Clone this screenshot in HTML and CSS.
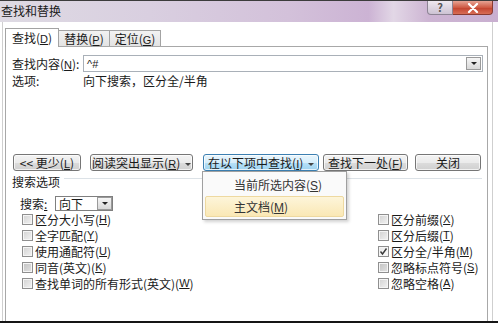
FILE: index.html
```html
<!DOCTYPE html>
<html lang="zh-CN">
<head>
  <meta charset="UTF-8" />
  <title>查找和替换</title>
  <link rel="stylesheet" href="styles.css">
</head>
<body>

  <div class="dialog">
    <div class="titlebar">
      <span class="title">查找和替换</span>
      <div class="caption-btns">
        <span class="cap-help">?</span>
        <span class="cap-close">
          <svg width="12" height="10" viewBox="0 0 12 10"><path d="M2 1 L10 9 M10 1 L2 9" stroke="#fff" stroke-width="2.2" stroke-linecap="round"/></svg>
        </span>
      </div>
    </div>

    <div class="client">
      <div class="tabs">
        <div class="tab active">查找(<u class="k">D</u>)</div>
        <div class="tab">替换(<u class="k">P</u>)</div>
        <div class="tab">定位(<u class="k">G</u>)</div>
      </div>

      <div class="panel">
        <div class="find-row">
          <span class="field-label">查找内容(<u class="k">N</u>):</span>
          <div class="combo">
            <span class="combo-text">^#</span>
            <span class="drop-btn"><i class="tri"></i></span>
          </div>
        </div>

        <div class="opt-row">
          <span class="field-label">选项:</span>
          <span>向下搜索，区分全/半角</span>
        </div>

        <div class="btn-row">
          <button class="btn btn-less">&lt;&lt; 更少(<u class="k">L</u>)</button>
          <button class="btn btn-read">阅读突出显示(<u class="k">R</u>) <i class="tri"></i></button>
          <div class="menu-wrap">
            <button class="btn btn-find-in">在以下项中查找(<u class="k">I</u>) <i class="tri"></i></button>
            <ul class="menu">
              <li>当前所选内容(<u>S</u>)</li>
              <li class="hover">主文档(<u>M</u>)</li>
            </ul>
          </div>
          <button class="btn btn-next">查找下一处(<u class="k">F</u>)</button>
          <button class="btn btn-close">关闭</button>
        </div>

        <div class="group-row">
          <span>搜索选项</span>
          <span class="group-line"></span>
        </div>

        <div class="search-row">
          <span class="search-label">搜索<u>:</u></span>
          <div class="select">
            <span class="select-text">向下</span>
            <span class="drop-btn"><i class="tri"></i></span>
          </div>
        </div>

        <div class="check-grid">
          <div class="check"><span class="box"></span>区分大小写(<u class="k">H</u>)</div>
          <div class="check"><span class="box"></span>区分前缀(<u class="k">X</u>)</div>
          <div class="check"><span class="box"></span>全字匹配(<u class="k">Y</u>)</div>
          <div class="check"><span class="box"></span>区分后缀(<u class="k">T</u>)</div>
          <div class="check"><span class="box"></span>使用通配符(<u class="k">U</u>)</div>
          <div class="check"><span class="box checked"><svg width="9" height="9" viewBox="0 0 9 9"><path d="M1.5 4.5 L3.5 7 L7.5 1.5" fill="none" stroke="#3a3a3a" stroke-width="1.4"/></svg></span>区分全/半角(<u class="k">M</u>)</div>
          <div class="check"><span class="box dim"></span>同音(英文)(<u class="k">K</u>)</div>
          <div class="check"><span class="box dim"></span>忽略标点符号(<u class="k">S</u>)</div>
          <div class="check"><span class="box"></span>查找单词的所有形式(英文)(<u class="k">W</u>)</div>
          <div class="check"><span class="box"></span>忽略空格(<u class="k">A</u>)</div>
        </div>
      </div>
    </div>
  </div>

</body>
</html>
```

FILE: styles.css
```css
* {
  box-sizing: border-box;
}

body {
  margin: 0;
  background: #fff;
  font-family: "Noto Sans CJK SC", "DejaVu Sans", sans-serif;
  font-size: 12px;
  color: #1a1a1a;
  overflow: hidden;
}

u.k {
  font-family: "Liberation Sans", sans-serif;
  font-size: 11px;
}

.dialog {
  width: 498px;
  height: 323px;
  display: flex;
  flex-direction: column;
  border-bottom: 2px solid #151515;
}

/* title bar */
.titlebar {
  height: 22px;
  flex: none;
  display: flex;
  align-items: flex-start;
  border-top: 1px solid #3c3c3c;
  background: linear-gradient(90deg, #dedae3 0%, #d9cfe0 30%, #d3c1da 58%, #ccb3d4 74%, #e2d7e6 79%, #cdb5d3 86%, #c9afd0 100%);
}

.title {
  line-height: 20px;
  padding-left: 1px;
}

.caption-btns {
  margin-left: auto;
  margin-right: 5px;
  display: flex;
}

.cap-help {
  width: 26px;
  height: 14px;
  border: 1px solid #8d8494;
  border-top: none;
  border-radius: 0 0 0 4px;
  background: linear-gradient(#eee8f0, #cdc3d3);
  color: #555;
  font-size: 11px;
  line-height: 12px;
  text-align: center;
  font-weight: bold;
}

.cap-close {
  width: 40px;
  height: 14px;
  border: 1px solid #8a3a30;
  border-top: none;
  border-left: none;
  border-radius: 0 0 4px 0;
  background: linear-gradient(#e7a394, #cf5a44 50%, #c2412d 51%, #d86d55);
  display: flex;
  align-items: center;
  justify-content: center;
}

/* client area */
.client {
  flex: 1;
  display: flex;
  flex-direction: column;
  margin: 0 5px 0 2px;
  padding: 6px 4px 0 2px;
  border-left: 1px solid #cfcfcf;
  border-right: 1px solid #cfcfcf;
}

.tabs {
  display: flex;
  align-items: flex-end;
  height: 18px;
  flex: none;
  position: relative;
  z-index: 1;
}

.tab {
  width: 52px;
  height: 16px;
  line-height: 15px;
  text-align: center;
  border: 1px solid #a3a3a3;
  border-bottom: none;
  background: linear-gradient(#f2f2f2, #e3e3e3);
  margin-left: -1px;
}

.tab.active {
  width: 54px;
  height: 19px;
  line-height: 17px;
  margin-left: 0;
  margin-bottom: -1px;
  background: #fff;
  position: relative;
  z-index: 2;
}

.panel {
  flex: 1;
  border: 1px solid #a8a8a8;
  border-bottom: none;
  background: #fff;
}

.field-label {
  width: 77px;
  padding-left: 6px;
  flex: none;
}

.find-row {
  margin-top: 8px;
  height: 17px;
  display: flex;
  align-items: center;
}

.combo {
  width: 400px;
  height: 17px;
  border: 1px solid #a9b0b8;
  display: flex;
  align-items: center;
  padding-left: 3px;
}

.combo-text {
  font-family: "Liberation Sans", sans-serif;
  font-size: 11px;
}

.drop-btn {
  margin-left: auto;
  margin-right: 1px;
  width: 15px;
  height: 13px;
  border: 1px solid #9a9a9a;
  background: linear-gradient(#f6f6f6, #d8d8d8);
  display: flex;
  align-items: center;
  justify-content: center;
}

.tri {
  display: inline-block;
  width: 0;
  height: 0;
  border-left: 3px solid transparent;
  border-right: 3px solid transparent;
  border-top: 3px solid #222;
  vertical-align: middle;
}

.opt-row {
  margin-top: 1px;
  line-height: 16px;
  display: flex;
}

/* buttons */
.btn-row {
  margin-top: 65px;
  height: 17px;
  display: flex;
  padding-left: 7px;
}

.btn {
  height: 17px;
  padding: 0;
  font: inherit;
  line-height: 15px;
  color: #1a1a1a;
  border: 1px solid #767676;
  border-radius: 3px;
  background: linear-gradient(#f3f3f3 0%, #ebebeb 50%, #dcdcdc 51%, #d0d0d0 100%);
  box-shadow: inset 0 0 0 1px rgba(255, 255, 255, 0.7);
}

.btn .tri {
  margin-left: 2px;
  border-top-color: #444;
}

.btn-less { width: 68px; }
.btn-read { width: 103px; margin-left: 9px; }
.btn-next { width: 85px; margin-left: 4px; }
.btn-close { width: 66px; margin-left: 7px; }

.menu-wrap {
  position: relative;
  margin-left: 10px;
}

.btn-find-in {
  width: 116px;
  border-color: #3c7fb1;
  background: linear-gradient(#e9f5fc 0%, #d6eefb 50%, #b7e1f8 51%, #9fd3f0 100%);
}

.menu {
  position: absolute;
  top: 17px;
  left: -1px;
  width: 145px;
  margin: 0;
  padding: 2px;
  list-style: none;
  background: #fafafa;
  border: 1px solid #a0a0a0;
  box-shadow: 2px 2px 3px rgba(0, 0, 0, 0.18);
  z-index: 5;
}

.menu li {
  height: 21px;
  line-height: 20px;
  padding-left: 28px;
  color: #333;
  border: 1px solid transparent;
  border-radius: 2px;
}

.menu li + li {
  margin-top: 1px;
}

.menu li u {
  font-family: "Liberation Sans", sans-serif;
}

.menu li.hover {
  background: linear-gradient(#fdf5da, #fae8b5);
  border-color: #eed9a0;
}

/* search options */
.group-row {
  margin-top: 3px;
  height: 16px;
  line-height: 16px;
  display: flex;
  padding-left: 6px;
}

.group-line {
  flex: 1;
  height: 1px;
  margin: 4px 5px 0 4px;
  background: #dce2e7;
}

.search-row {
  margin-top: 6px;
  height: 15px;
  display: flex;
  align-items: center;
  padding-left: 14px;
}

.search-label {
  width: 35px;
}

.select {
  width: 58px;
  height: 15px;
  border: 1px solid #7f7f7f;
  display: flex;
  align-items: center;
  padding-left: 3px;
  line-height: 13px;
}

.select .drop-btn {
  height: 13px;
  margin-right: 0;
}

.check-grid {
  display: grid;
  grid-template-columns: 356px 1fr;
  grid-auto-rows: 16px;
  padding-left: 16px;
}

.check {
  display: flex;
  align-items: center;
  white-space: nowrap;
}

.box {
  width: 11px;
  height: 11px;
  margin-right: 2px;
  border: 1px solid #8f8f8f;
  background: linear-gradient(135deg, #d2d2d2, #f3f3f3);
  box-shadow: inset 0 0 0 1px #f5f5f5;
  display: flex;
  align-items: center;
  justify-content: center;
}

.box.dim {
  background: linear-gradient(135deg, #c2c2c2, #e2e2e2);
}

.box.checked {
  background: linear-gradient(135deg, #e8e8e8, #fafafa);
}
```
